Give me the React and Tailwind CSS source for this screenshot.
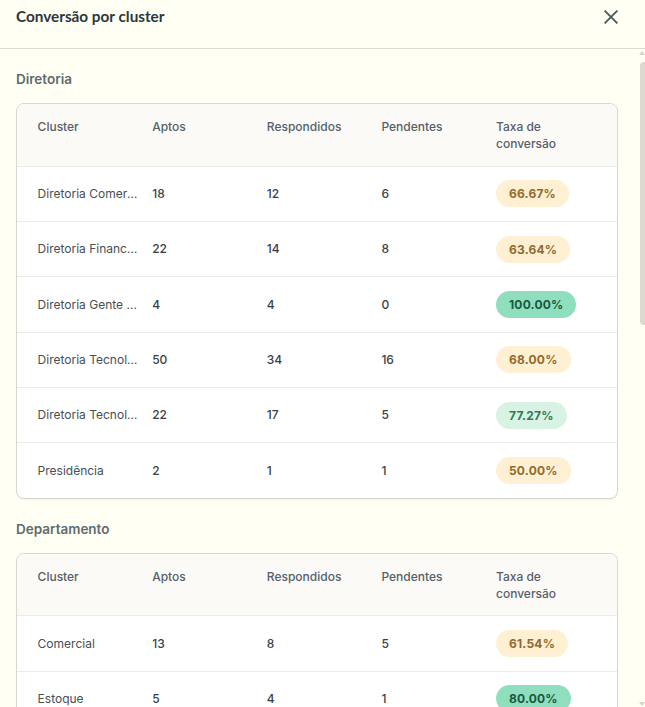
import React from "react";

const diretoria = [
  ["Diretoria Comercial", 18, 12, 6, "66.67%", "mid"],
  ["Diretoria Financeira", 22, 14, 8, "63.64%", "mid"],
  ["Diretoria Gente e Gestão", 4, 4, 0, "100.00%", "top"],
  ["Diretoria Tecnologia", 50, 34, 16, "68.00%", "mid"],
  ["Diretoria Tecnologia II", 22, 17, 5, "77.27%", "good"],
  ["Presidência", 2, 1, 1, "50.00%", "mid"],
];

const departamento = [
  ["Comercial", 13, 8, 5, "61.54%", "mid"],
  ["Estoque", 5, 4, 1, "80.00%", "top"],
];

const badgeClass = {
  mid: "bg-[#fff0d4] text-[#8f6a2c]",
  good: "bg-[#d8f2e3] text-[#2f7a58]",
  top: "bg-[#8fdfbf] text-[#17583f]",
};

const ClusterTable = ({ rows }) => {
  return (
    <div className="bg-white border border-[#d9d7cf] rounded-lg shadow-[0_1px_2px_rgba(0,0,0,0.06)] overflow-hidden">
      <div className="grid grid-cols-[repeat(5,114.6px)] pl-[20.6px] pt-[14px] h-[61.7px] bg-[#fbfaf7] text-[12px] leading-[17px] font-medium text-[#55606a]">
        <div>Cluster</div>
        <div>Aptos</div>
        <div>Respondidos</div>
        <div>Pendentes</div>
        <div className="w-[80px]">Taxa de conversão</div>
      </div>
      {rows.map((row) => (
        <div
          key={row[0]}
          className="grid grid-cols-[repeat(5,114.6px)] items-center pl-[20.6px] h-[55.33px] border-t border-[#ebebe8] text-[12px] font-medium text-[#3a4146]"
        >
          <div className="truncate pr-[13px] pt-[0.5px] font-normal text-[#474e54]">{row[0]}</div>
          <div className="pt-[0.5px]">{row[1]}</div>
          <div className="pt-[0.5px]">{row[2]}</div>
          <div className="pt-[0.5px]">{row[3]}</div>
          <div>
            <span className={`inline-block px-[13px] h-[27px] leading-[27px] rounded-full text-[12px] tracking-[0.2px] font-bold ${badgeClass[row[5]]}`}>
              {row[4]}
            </span>
          </div>
        </div>
      ))}
    </div>
  );
};

export default function App() {
  return (
    <div className="relative w-[645px] h-[707px] overflow-hidden bg-[#fffff4] font-['Inter',sans-serif]">
      {/* header */}
      <div className="flex items-start justify-between h-[49px] pl-[16px] pr-[27px] pt-[6px] border-b border-[#dcdad2]">
        <h1 className="font-['Lato',sans-serif] font-bold text-[15.3px] leading-[20px] text-[#2b3640]">Conversão por cluster</h1>
        <svg width="14" height="14" viewBox="0 0 14 14" className="mt-[4px]" fill="none" stroke="#4d5960" strokeWidth="1.9">
          <path d="M0.6 0.6L13.4 13.4M13.4 0.6L0.6 13.4" />
        </svg>
      </div>

      <div className="pl-[16px] pr-[27px]">
        <h2 className="mt-[21px] mb-[15px] text-[13.5px] leading-[18px] font-semibold text-[#5f6b6c]">Diretoria</h2>
        <ClusterTable rows={diretoria} />
        <h2 className="mt-[21px] mb-[15px] text-[13.5px] leading-[18px] font-semibold text-[#5f6b6c]">Departamento</h2>
        <ClusterTable rows={departamento} />
      </div>

      {/* scrollbar */}
      <div className="absolute right-0 top-[62px] w-[5px] h-[263px] bg-[#dcdad0] rounded-l-sm"></div>
      <div className="absolute right-0 top-[51px] w-0 h-0 border-x-[3px] border-x-transparent border-b-[4px] border-b-[#d5d3ca]"></div>
      <div className="absolute right-0 bottom-[1px] w-0 h-0 border-x-[3px] border-x-transparent border-t-[4px] border-t-[#d5d3ca]"></div>
    </div>
  );
}
